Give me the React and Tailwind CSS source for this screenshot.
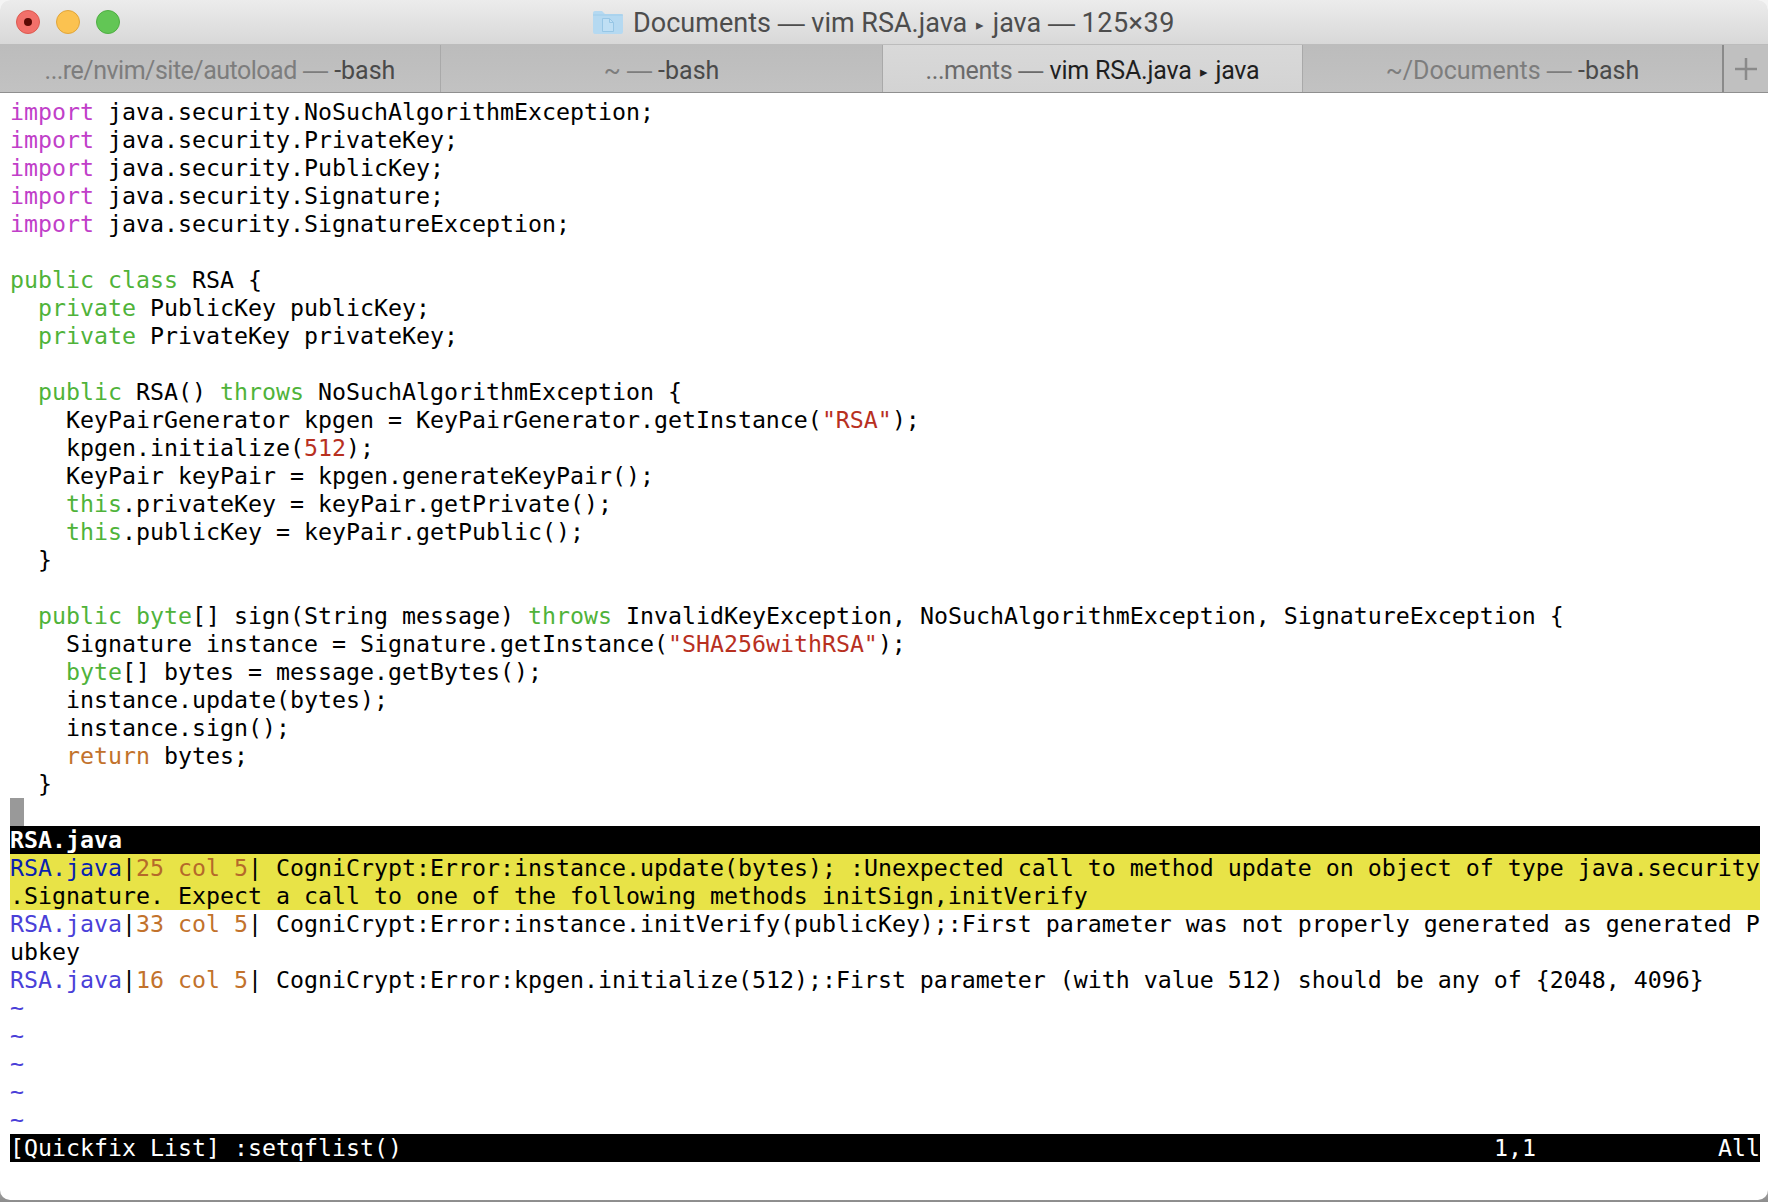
const mono = "font-['DejaVu_Sans_Mono','Liberation_Mono',monospace]";

const KW = { m: 'text-[#c13fc9]', g: 'text-[#4fb33a]', o: 'text-[#c2722c]', r: 'text-[#b8301f]', b: 'text-[#4a3fd8]', d: 'text-[#0a1fb0]', y: 'text-[#b5692a]' };

const code = [
    [['m', 'import'], ' java.security.NoSuchAlgorithmException;'],
    [['m', 'import'], ' java.security.PrivateKey;'],
    [['m', 'import'], ' java.security.PublicKey;'],
    [['m', 'import'], ' java.security.Signature;'],
    [['m', 'import'], ' java.security.SignatureException;'],
    [],
    [['g', 'public'], ' ', ['g', 'class'], ' RSA {'],
    ['  ', ['g', 'private'], ' PublicKey publicKey;'],
    ['  ', ['g', 'private'], ' PrivateKey privateKey;'],
    [],
    ['  ', ['g', 'public'], ' RSA() ', ['g', 'throws'], ' NoSuchAlgorithmException {'],
    ['    KeyPairGenerator kpgen = KeyPairGenerator.getInstance(', ['r', '"RSA"'], ');'],
    ['    kpgen.initialize(', ['r', '512'], ');'],
    ['    KeyPair keyPair = kpgen.generateKeyPair();'],
    ['    ', ['g', 'this'], '.privateKey = keyPair.getPrivate();'],
    ['    ', ['g', 'this'], '.publicKey = keyPair.getPublic();'],
    ['  }'],
    [],
    ['  ', ['g', 'public'], ' ', ['g', 'byte'], '[] sign(String message) ', ['g', 'throws'], ' InvalidKeyException, NoSuchAlgorithmException, SignatureException {'],
    ['    Signature instance = Signature.getInstance(', ['r', '"SHA256withRSA"'], ');'],
    ['    ', ['g', 'byte'], '[] bytes = message.getBytes();'],
    ['    instance.update(bytes);'],
    ['    instance.sign();'],
    ['    ', ['o', 'return'], ' bytes;'],
    ['  }'],
];

function Line({ parts = [], className = '' }) {
    return (
        <div className={`h-7 whitespace-pre ${className}`}>
            {parts.map((part, i) =>
                typeof part === 'string' ? part : <span key={i} className={KW[part[0]]}>{part[1]}</span>
            )}
        </div>
    );
}

function Dash() {
    return <span className="font-['Liberation_Sans',sans-serif]">—</span>;
}

function Tri() {
    return <span className="mx-[2px] align-[2px] text-[15px]">▸</span>;
}

function Tab({ width, dim, dimClass = '', strong, strongClass = '', active, last }) {
    return (
        <div
            className={`flex h-full items-center justify-center ${width} ${
                active
                    ? 'bg-gradient-to-b from-[#d9d9d9] to-[#d3d3d3]'
                    : 'bg-gradient-to-b from-[#bcbcbc] to-[#c2c2c2]'
            } ${last ? 'border-r-2 border-[#8a8a8a]' : 'border-r border-[#a9a9a9]'}`}
        >
            <span className={`pt-[5px] text-[25px] ${active ? 'text-[#6a6a6a]' : 'text-[#7d7d7d]'}`}>
                <span className={dimClass}>{dim}</span> <Dash />{' '}
                <span className={`${active ? 'text-[#1f1f1f]' : 'text-[#4a4a4a]'} ${strongClass}`}>{strong}</span>
            </span>
        </div>
    );
}

function Light({ color, border, children }) {
    return (
        <div className={`flex h-[24px] w-[24px] items-center justify-center rounded-full border ${color} ${border}`}>
            {children}
        </div>
    );
}

export default function App() {
    return (
        <div className="h-[1202px] w-[1768px] overflow-hidden bg-gradient-to-b from-[#f4f4f4] from-95% to-[#8d8d8d] font-['Roboto',sans-serif]">
            <div className="flex h-[1200px] flex-col overflow-hidden rounded-[10px] bg-white">
                <div className="relative flex h-[45px] shrink-0 items-center justify-center border-b border-[#bcbcbc] bg-gradient-to-b from-[#ececec] to-[#d8d8d8]">
                    <div className="absolute left-[16px] top-[10px] flex gap-[16px]">
                        <Light color="bg-[#f2706a]" border="border-[#dc5a50]">
                            <div className="h-[8px] w-[8px] rounded-full bg-[#5c0a05]" />
                        </Light>
                        <Light color="bg-[#fbc250]" border="border-[#e0a53a]" />
                        <Light color="bg-[#62c655]" border="border-[#4fae43]" />
                    </div>
                    <svg width="30" height="23" viewBox="0 0 30 23" className="mr-[10px]">
                        <path d="M0 2a2 2 0 0 1 2-2h7l3 3h16a2 2 0 0 1 2 2v16a2 2 0 0 1-2 2H2a2 2 0 0 1-2-2z" fill="#b5d9f1" />
                        <path d="M0 4h30" stroke="#9fcdea" strokeWidth="1" />
                        <path d="M9.5 7.5h7l4 4v9h-11z" fill="#bfdff4" stroke="#97c6e5" strokeWidth="1" />
                        <path d="M16.5 7.5v4h4" fill="none" stroke="#97c6e5" strokeWidth="1" />
                    </svg>
                    <span className="pt-[3px] text-[27px] text-[#4d4d4d]">
                        Documents <Dash /> vim RSA.java <Tri /> java <Dash /> <span className="tracking-[0.5px]">125×39</span>
                    </span>
                </div>
                <div className="flex h-[48px] shrink-0 border-b border-[#8f8f8f]">
                    <Tab width="w-[441px]" dim="...re/nvim/site/autoload" dimClass="tracking-[-0.5px]" strong="-bash" />
                    <Tab width="w-[442px]" dim="~" strong="-bash" />
                    <Tab width="w-[420px]" dim="...ments" dimClass="tracking-[-0.4px]" strong={<>vim RSA.java <Tri /> java</>} strongClass="tracking-[-0.2px]" active />
                    <Tab width="w-[421px]" dim="~/Documents" strong="-bash" last />
                    <div className="flex flex-1 items-center justify-center bg-[#c0c0c0] pt-[1px]">
                        <svg width="22" height="22" viewBox="0 0 22 22">
                            <path d="M0 11h22M11 0v22" stroke="#8a8a8a" strokeWidth="2.5" />
                        </svg>
                    </div>
                </div>
                <div className={`flex-1 pl-[10px] pr-[8px] pt-[5px] text-[23.25px] leading-7 text-black ${mono}`}>
                    {code.map((parts, i) => (
                        <Line key={i} parts={parts} />
                    ))}
                    <div className="h-7 w-[14px] bg-[#999999]" />
                    <div className="h-7 whitespace-pre bg-black font-bold text-white">RSA.java</div>
                    <div className="bg-[#e8e347]">
                        <Line parts={[['d', 'RSA.java'], '|', ['y', '25'], ' ', ['y', 'col'], ' ', ['y', '5'], '| CogniCrypt:Error:instance.update(bytes); :Unexpected call to method update on object of type java.security']} />
                        <Line parts={['.Signature. Expect a call to one of the following methods initSign,initVerify']} />
                    </div>
                    <Line parts={[['b', 'RSA.java'], '|', ['o', '33'], ' ', ['o', 'col'], ' ', ['o', '5'], '| CogniCrypt:Error:instance.initVerify(publicKey);:First parameter was not properly generated as generated P']} />
                    <Line parts={['ubkey']} />
                    <Line parts={[['b', 'RSA.java'], '|', ['o', '16'], ' ', ['o', 'col'], ' ', ['o', '5'], '| CogniCrypt:Error:kpgen.initialize(512);:First parameter (with value 512) should be any of {2048, 4096}']} />
                    {[0, 1, 2, 3, 4].map((i) => (
                        <Line key={i} parts={[['b', '~']]} />
                    ))}
                    <div className="flex h-7 justify-between whitespace-pre bg-black text-white">
                        <span>[Quickfix List] :setqflist()</span>
                        <span className="flex">
                            <span className="w-[224px]">1,1</span>
                            <span>All</span>
                        </span>
                    </div>
                </div>
            </div>
        </div>
    );
}
